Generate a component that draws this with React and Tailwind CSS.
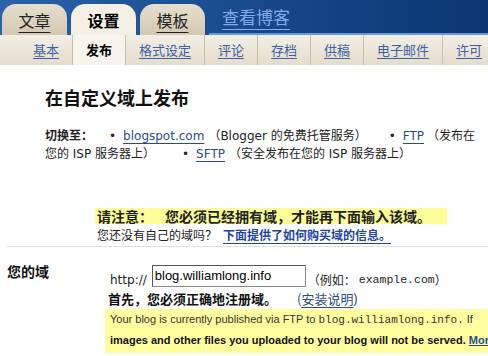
import React from 'react';

const mixed = "font-['DejaVu_Sans','Noto_Sans_CJK_SC',sans-serif]";
const cjk = "font-['Noto_Sans_CJK_SC',sans-serif]";
const arial = "font-['Liberation_Sans','Noto_Sans_CJK_SC',sans-serif]";
const mono = "font-['Liberation_Mono',monospace]";

const subTabs = ["基本", "发布", "格式设定", "评论", "存档", "供稿", "电子邮件", "许可"];

function Tab({ label, active }) {
  return (
    <div
      className={`h-[31px] w-[65px] rounded-t-[14px] flex items-center justify-center text-[16px] ${cjk} ${
        active
          ? "bg-[#f4f0e6] font-bold text-black"
          : "bg-gradient-to-b from-[#e6dfcf] to-[#d3c8b1] text-[#222] underline underline-offset-[5px]"
      }`}
    >
      {label}
    </div>
  );
}

export default function App() {
  return (
    <div className={`w-[488px] h-[356px] overflow-hidden bg-white whitespace-nowrap ${mixed}`}>
      {/* top bar */}
      <div className="h-[35px] flex items-end gap-[4px] pl-[2px] bg-gradient-to-r from-[#2c62aa] via-[#174a8d] to-[#0b3571]">
        <Tab label="文章" />
        <Tab label="设置" active />
        <Tab label="模板" />
        <div className="flex-1 h-full flex items-center pl-[13px] border-b-2 border-[#6d98d6]">
          <a className={`text-[17px] ${cjk} text-[#86aaea] underline underline-offset-[5px]`}>查看博客</a>
        </div>
      </div>

      {/* sub nav */}
      <div className={`h-[30px] flex pl-[20px] bg-gradient-to-b from-[#f3efe6] to-[#e4dccb] text-[13px] ${cjk}`}>
        {subTabs.map((t, i) => (
          <div
            key={t}
            className={`px-[13px] flex items-center ${i > 0 ? "border-l border-[#c9bea8]" : ""} ${
              t === "发布" ? "bg-[#f7f4ee] font-bold text-black" : "text-[#3d5fa6] underline underline-offset-[3px]"
            }`}
          >
            {t}
          </div>
        ))}
      </div>

      {/* main */}
      <div className="pl-[45px] pt-[20px]">
        <h1 className={`text-[18px] font-bold leading-[24px] text-[#111] ${cjk}`}>在自定义域上发布</h1>
        <div className="mt-[17px] text-[12px] leading-[18px] text-[#222]">
          <div>
            <span className={`font-bold ${cjk}`}>切换至：</span>
            <span className="ml-[16px]">•</span>
            <a className="ml-[7px] text-[#2b4a90] underline underline-offset-[3px]">blogspot.com</a>
            <span className="ml-[4px]">（Blogger 的免费托管服务）</span>
            <span className="ml-[22px]">•</span>
            <a className="ml-[7px] text-[#2b4a90] underline underline-offset-[3px]">FTP</a>
            <span className="ml-[3px]">（发布在</span>
          </div>
          <div>
            <span>您的 ISP 服务器上）</span>
            <span className="ml-[27px]">•</span>
            <a className="ml-[7px] text-[#2b4a90] underline underline-offset-[3px]">SFTP</a>
            <span className="ml-[4px]">（安全发布在您的 ISP 服务器上）</span>
          </div>
        </div>
      </div>

      <div className="mt-[45px] pl-[95px]">
        <div className={`w-fit h-[16px] leading-[16px] bg-[#fdfd9a] pl-[2px] pr-[16px] text-[14px] font-bold text-[#222] ${cjk}`}>
          请注意：<span className="ml-[12px]">您必须已经拥有域，才能再下面输入该域。</span>
        </div>
        <div className={`mt-[2px] pl-[2px] text-[12px] leading-[18px] text-[#222] ${cjk}`}>
          您还没有自己的域吗？
          <a className="ml-[6px] font-bold text-[#2244a0] underline underline-offset-[3px]">下面提供了如何购买域的信息。</a>
        </div>
      </div>

      <div className="mt-[2px] ml-[7px] border-t border-[#e0e0e0]" />

      <div className="pt-[16px] flex">
        <div className={`w-[108px] shrink-0 pl-[7px] text-[14px] font-bold leading-[16px] text-[#111] ${cjk}`}>您的域</div>
        <div className="flex-1 min-w-0">
          <div className="h-[26px] flex items-end text-[12px] leading-[18px] text-[#222]">
            <span className="ml-[2px] mr-[5px]">http://</span>
            <div className={`h-[22px] w-[154px] mb-[2px] border border-[#8a8a8a] border-t-[#555] border-l-[#555] bg-white pl-[2px] flex items-center text-[13px] text-black ${arial}`}>
              blog.williamlong.info
            </div>
            <span className={`ml-[2px] ${cjk}`}>（例如：</span>
            <span className={`ml-[3px] text-[11.5px] ${mono}`}>example.com</span>
            <span className={cjk}>）</span>
          </div>
          <div className={`h-[20px] leading-[20px] text-[13px] text-[#111] ${cjk}`}>
            <span className="font-bold">首先，您必须正确地注册域。</span>
            <span className="ml-[20px] text-[#2b4a90]">(<a className="underline underline-offset-[3px]">安装说明</a><span className="text-[#222]">)</span></span>
          </div>
          <div className={`-ml-[3px] pl-[5px] pb-[3px] bg-[#ffffa0] text-[11px] leading-[20px] text-[#333] ${arial}`}>
            <div>
              Your blog is currently published via FTP to <span className={`text-[11px] ${mono}`}>blog.williamlong.info.</span> If
            </div>
            <div className="font-bold text-[#111]">
              images and other files you uploaded to your blog will not be served.{" "}
              <a className="text-[#2b4a90] underline">More</a>
            </div>
          </div>
        </div>
      </div>
    </div>
  );
}
